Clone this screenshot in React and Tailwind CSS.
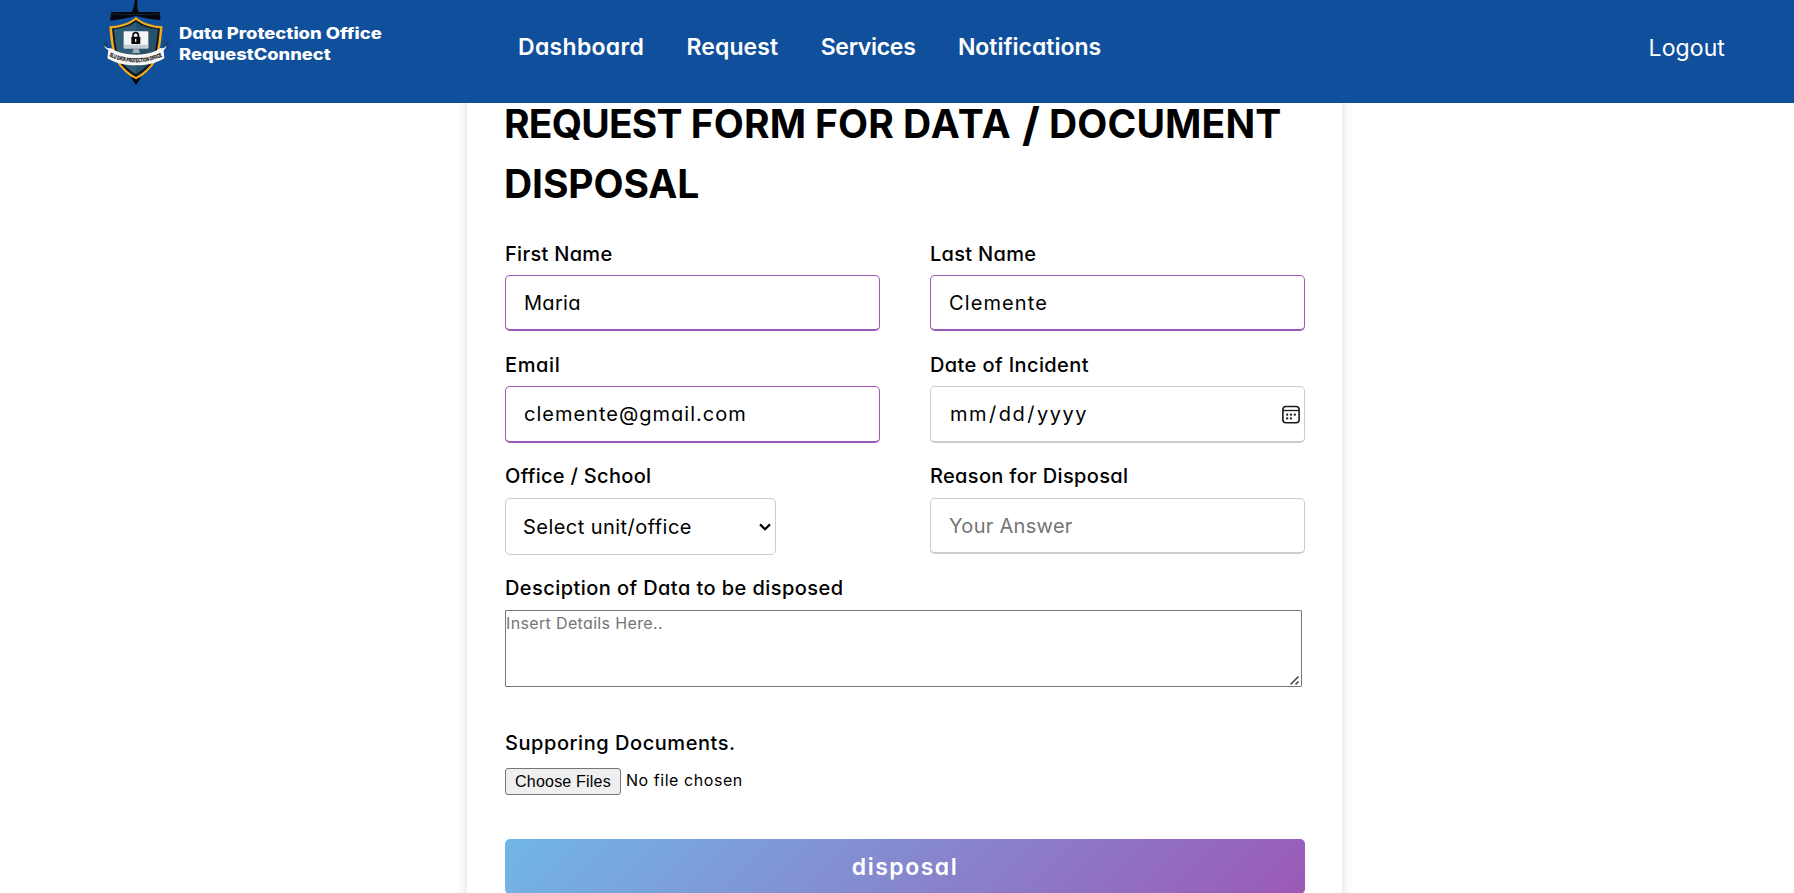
const field =
  "block w-[375px] rounded-[5px] border border-b-2 bg-white pl-[18px] text-[20px] text-black outline-none placeholder:text-[#757575] placeholder:opacity-100";

function Label({ children, spacing }) {
  return (
    <span className={`block h-[30px] whitespace-nowrap text-[20px] leading-[30px] font-medium ${spacing}`}>
      {children}
    </span>
  );
}

function Logo() {
  return (
    <svg className="h-[90px] w-[70px] shrink-0" viewBox="0 0 210 270" aria-hidden="true">
      <path d="M105 0h7v26l4 10 64 0 1 24-35-4-38-8-38 8-40 6 4-26 60 0 6-10z" fill="#05070c" />
      <path d="M36 42l72 2 72-2" fill="none" stroke="#1a4270" strokeWidth="1.5" />
      <path d="M92 232h32l-16 23z" fill="#05070c" />
      <path
        d="M108 51c18 17 46 26 80 28-3 26-5 62-14 88-10 30-36 55-66 71-30-16-56-41-66-71-9-26-12-62-14-88 34-2 62-11 80-28z"
        fill="#f6aa16"
      />
      <path
        d="M108 59c18 15 42 23 72 26-3 26-5 56-12 80-9 28-33 51-60 66-27-15-51-38-60-66-7-24-9-54-12-80 30-3 54-11 72-26z"
        fill="#0c1a28"
      />
      <path
        d="M108 66c18 13 40 20 66 22-3 25-5 51-12 74-9 26-29 46-54 60-25-14-45-34-54-60-7-23-9-49-12-74 26-2 48-9 66-22z"
        fill="#28506a"
      />
      <path d="M108 66v156c-25-14-45-34-54-60-7-23-9-49-12-74 26-2 48-9 66-22z" fill="#2f5c76" />
      <rect x="71" y="94" width="74" height="50" rx="3" fill="#f4f6f7" />
      <path d="M71 134h74v9a3 3 0 0 1-3 3H74a3 3 0 0 1-3-3z" fill="#c3ccd2" />
      <path d="M101 146h15l4 13H97z" fill="#9fb0ba" />
      <path d="M99 113v-7a8 8 0 0 1 16 0v7" fill="none" stroke="#06080c" strokeWidth="5" />
      <rect x="94" y="110" width="27" height="22" rx="2" fill="#06080c" />
      <path d="M107 117v8" stroke="#fff" strokeWidth="4" />
      <path d="M8 123l14 4 4 22-12-6zM208 123l-14 4-4 22 12-6z" fill="#164273" />
      <path
        d="M12 136c6 8 13 10 20 8 21 14 48 20 76 20s54-6 73-20c8 2 14 0 19-8-2 9-5 12-9 14l2 25c-25 16-54 21-85 21s-61-5-86-21l3-25c-6-2-11-6-13-14z"
        fill="#f7f7f5"
      />
      <path id="ribbon" d="M25 167c50 26 116 26 166 0" fill="none" />
      <text fontFamily="Liberation Sans Narrow, Liberation Sans" fontSize="17" fontWeight="700" fill="#111" stroke="#111" strokeWidth="0.8">
        <textPath href="#ribbon" startOffset="3" textLength="164" lengthAdjust="spacingAndGlyphs">
          SLU DATA PROTECTION OFFICE
        </textPath>
      </text>
    </svg>
  );
}

function CalendarIcon() {
  return (
    <svg
      className="pointer-events-none absolute top-[55px] right-[4px] h-[20px] w-[20px] text-[#1a1a1a]"
      viewBox="0 0 20 20"
      aria-hidden="true"
    >
      <rect x="1.9" y="1.5" width="16.2" height="16.2" rx="3" fill="none" stroke="currentColor" strokeWidth="1.6" />
      <path d="M2 5.5h16" stroke="currentColor" strokeWidth="1.3" />
      <g fill="currentColor">
        <circle cx="6.2" cy="9.7" r="1.15" />
        <circle cx="10" cy="9.7" r="1.15" />
        <circle cx="13.8" cy="9.7" r="1.15" />
        <circle cx="6.2" cy="13.4" r="1.15" />
        <circle cx="10" cy="13.4" r="1.15" />
      </g>
    </svg>
  );
}

function Header() {
  return (
    <header className="relative z-10 flex h-[103px] w-full items-start bg-[#104f9c] text-white">
      <div className="flex w-[518px] pl-[100px]">
        <Logo />
        <div className="flex flex-col items-start pt-6 pl-[9px] text-[15.5px] leading-[20.5px] font-extrabold whitespace-nowrap">
          <span className="origin-left scale-x-[1.19]">Data Protection Office</span>
          <span className="origin-left scale-x-[1.18]">RequestConnect</span>
        </div>
      </div>
      <nav className="flex gap-[42.4px] pt-[30px] text-[23px] leading-[34px] font-semibold">
        <a className="tracking-[0.3px]">Dashboard</a>
        <a className="tracking-[0.1px]">Request</a>
        <a className="tracking-[-0.3px]">Services</a>
        <a>Notifications</a>
      </nav>
      <a className="mr-[69px] ml-auto pt-[31px] text-[23px] leading-[34px] tracking-[0.1px]">Logout</a>
    </header>
  );
}

export default function App() {
  return (
    <div className="h-[893px] w-full overflow-hidden bg-white font-[Inter,sans-serif] text-black [font-feature-settings:'cv11']">
      <Header />
      <div className="-mt-[34px] flex justify-center pl-[15px]">
        <main className="w-[875px] bg-white px-[38px] pt-[25px] pb-6 shadow-[0_5px_10px_rgba(0,0,0,0.15)]">
          <h1 className="h-[120px] text-[39px] leading-[60px] font-bold whitespace-nowrap">
            <span className="-ml-px flex h-[60px] gap-[9px]">
              <span className="tracking-[-0.8px]">REQUEST</span>
              <span className="tracking-[0.1px]">FORM</span>
              <span className="tracking-[0.1px]">FOR</span>
              <span className="tracking-[1.3px]">DATA</span>
              <span className="ml-[1px] text-[46px]">/</span>
              <span className="tracking-[0.15px]">DOCUMENT</span>
            </span>
            <span className="-ml-px block tracking-[-0.1px]">DISPOSAL</span>
          </h1>
          <form className="w-[800px] pt-[25px]">
            <div className="grid grid-cols-[375px_375px] gap-x-[50px]">
              <label className="h-[111px]">
                <Label spacing="tracking-[0.3px]">First Name</Label>
                <input className={`${field} mt-[6px] h-[56px] border-[#9b59b6] tracking-[0.3px]`} defaultValue="Maria" />
              </label>
              <label className="h-[111px]">
                <Label spacing="tracking-[0.3px]">Last Name</Label>
                <input className={`${field} mt-[6px] h-[56px] border-[#9b59b6] tracking-[1.1px]`} defaultValue="Clemente" />
              </label>
              <label className="h-[111px]">
                <Label spacing="tracking-[0.6px]">Email</Label>
                <input
                  className={`${field} mt-[6px] h-[57px] border-[#9b59b6] tracking-[1px]`}
                  defaultValue="clemente@gmail.com"
                />
              </label>
              <label className="relative h-[111px]">
                <Label spacing="tracking-[0.4px]">Date of Incident</Label>
                <input
                  type="date"
                  className={`${field} mt-[6px] h-[57px] border-[#ccc] pr-[3px] tracking-[1.5px] [&::-webkit-calendar-picker-indicator]:opacity-0`}
                />
                <CalendarIcon />
              </label>
              <label className="relative h-[112px]">
                <Label spacing="tracking-[0.3px]">Office / School</Label>
                <select className="mt-[7px] block h-[57px] w-[271px] appearance-none rounded-[5px] border border-[#ccc] bg-white pl-[17px] text-[20px] tracking-[0.45px] outline-none">
                  <option>Select unit/office</option>
                </select>
                <svg
                  className="pointer-events-none absolute top-[61px] left-[253px] h-[10px] w-[14px]"
                  viewBox="0 0 14 10"
                  aria-hidden="true"
                >
                  <path d="M2 2.4L7 7.2l5-4.8" fill="none" stroke="#000" strokeWidth="2.2" />
                </svg>
              </label>
              <label className="h-[112px]">
                <Label spacing="tracking-[0.33px]">Reason for Disposal</Label>
                <input className={`${field} mt-[7px] h-[56px] border-[#ccc] tracking-[0.3px]`} placeholder="Your Answer" />
              </label>
            </div>
            <label className="relative block h-[155px]">
              <Label spacing="tracking-[0.43px]">Desciption of Data to be disposed</Label>
              <textarea
                className="mt-[7px] block h-[77px] w-[797px] resize-none rounded-[1px] border border-[#767676] bg-white p-0 text-[16px] leading-6 tracking-[0.35px] outline-none placeholder:text-[#757575] placeholder:opacity-100"
                placeholder="Insert Details Here.."
              />
              <svg
                className="pointer-events-none absolute top-[102px] left-[784px] h-[11px] w-[11px]"
                viewBox="0 0 11 11"
                aria-hidden="true"
              >
                <path d="M1.5 9.5l8-8M6.5 9.5l3-3" fill="none" stroke="#444" strokeWidth="1.6" />
              </svg>
            </label>
            <Label spacing="tracking-[0.55px]">Supporing Documents.</Label>
            <div className="mt-[10px] flex h-[71px] items-start">
              <button
                type="button"
                className="h-[27px] w-[116px] rounded-[3px] border border-[#767676] bg-[#efefef] font-['Liberation_Sans',sans-serif] text-[16px] leading-[24px] tracking-[0.2px]"
              >
                Choose Files
              </button>
              <span className="ml-[5px] text-[16px] leading-[25px] tracking-[0.55px]">No file chosen</span>
            </div>
            <button
              type="button"
              className="block h-[55px] w-full rounded-[5px] bg-[linear-gradient(135deg,#71b7e6,#9b59b6)] pt-[2px] text-[23px] font-semibold tracking-[1.5px] text-white"
            >
              disposal
            </button>
          </form>
        </main>
      </div>
    </div>
  );
}
